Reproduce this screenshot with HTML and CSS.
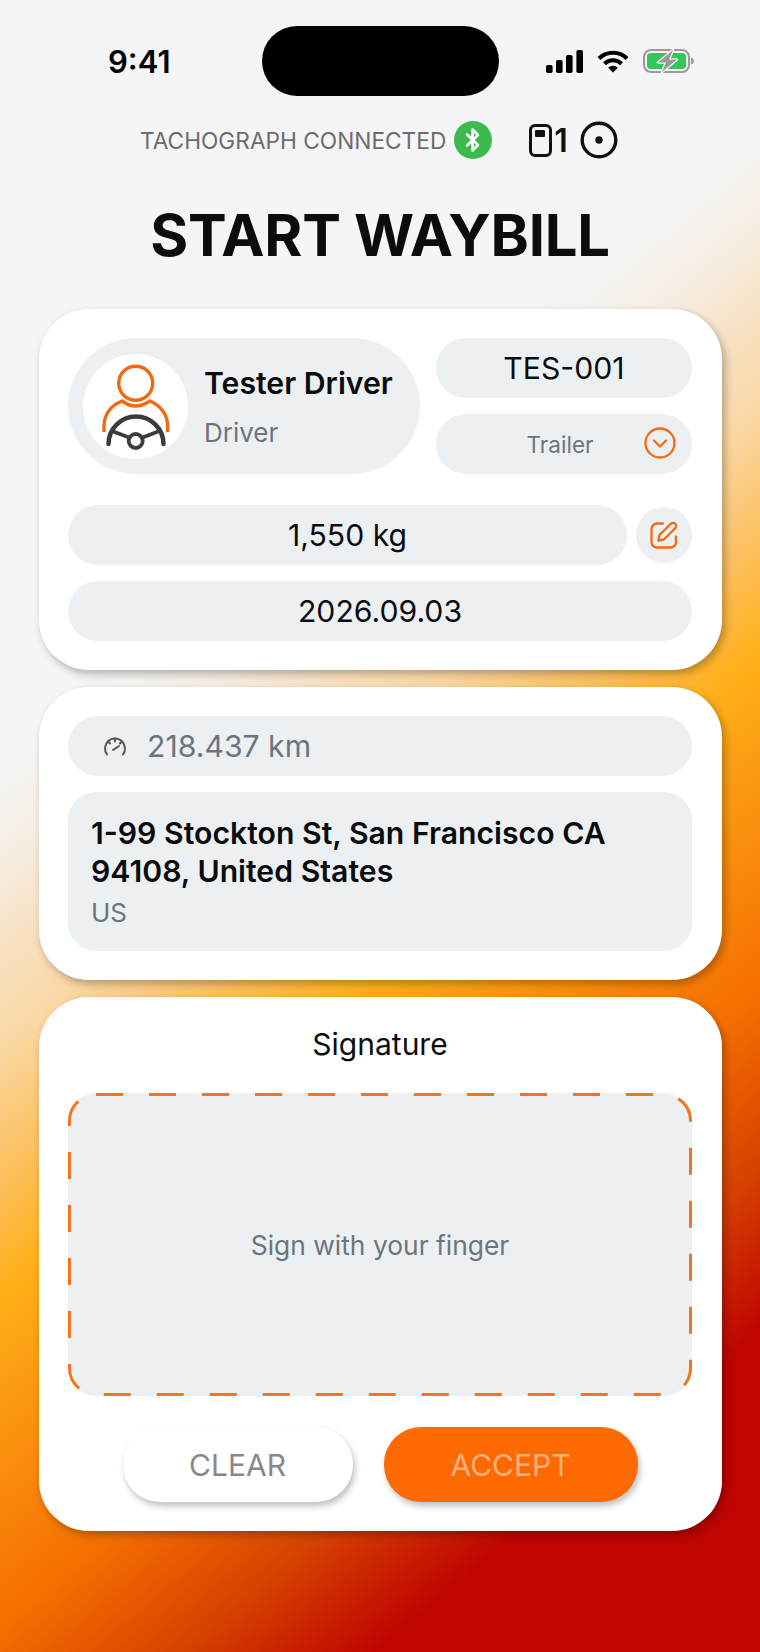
FILE: index.html
```html
<!DOCTYPE html>
<html lang="en">
<head>
  <meta charset="UTF-8">
  <meta name="viewport" content="width=device-width, initial-scale=1.0">
  <title>Start Waybill</title>

  <link rel="stylesheet" href="styles.css">
</head>
<body>

  <header class="status-bar">
    <div class="status-time">9:41</div>
    <div class="island"></div>
    <div class="status-icons">
      <svg width="37" height="23" viewBox="0 0 37 23"><rect x="0" y="15" width="6.6" height="8" rx="1.8"/><rect x="10" y="10" width="6.6" height="13" rx="1.8"/><rect x="20" y="5" width="6.6" height="18" rx="1.8"/><rect x="30.4" y="0" width="6.6" height="23" rx="1.8"/></svg>
      <svg class="wifi" width="32" height="23" viewBox="0 0 32 23"><path d="M2 8.5a20 20 0 0 1 28 0" fill="none" stroke="#000" stroke-width="4"/><path d="M7.5 13.8a12.2 12.2 0 0 1 17 0" fill="none" stroke="#000" stroke-width="4"/><path d="M11.2 17.8a6.8 6.8 0 0 1 9.6 0L16 22.6z"/></svg>
      <svg class="battery" width="51" height="24" viewBox="0 0 51 24">
        <rect x="1" y="1" width="45" height="22" rx="7" fill="none" stroke="#9a9a9a" stroke-width="2"/>
        <rect x="4" y="4" width="39" height="16" rx="4" fill="#33c75a"/>
        <path d="M48 8.5c2 .6 3 2 3 3.500s-1 2.900-3 3.500z" fill="#9a9a9a"/>
        <path d="M30 1L15 13.500h8L19 23l15-12.500h-8z" fill="#9a9a9a" stroke="#f5f5f7" stroke-width="2.500" paint-order="stroke" stroke-linejoin="round"/>
      </svg>
    </div>
  </header>

  <div class="device-row">
    <span class="device-label">TACHOGRAPH CONNECTED</span>
    <span class="bt-badge">
      <svg width="16" height="26" viewBox="0 0 16 26"><path d="M2 7.500l11 10.500-5.500 5.500V2.500L13 8 2 18.500" fill="none" stroke="#fff" stroke-width="2.600" stroke-linejoin="round" stroke-linecap="round"/></svg>
    </span>
    <span class="card-slot">
      <svg width="23" height="33" viewBox="0 0 23 33"><rect x="1.500" y="1.500" width="20" height="30" rx="4.500" fill="none" stroke="#111" stroke-width="3"/><rect x="6" y="6" width="10" height="7" rx="1" fill="#111"/></svg>
      <span class="slot-number">1</span>
    </span>
    <svg class="target" width="38" height="38" viewBox="0 0 38 38"><circle cx="19" cy="19" r="16.800" fill="none" stroke="#111" stroke-width="3.400"/><circle cx="19" cy="19" r="3.700" fill="#111"/></svg>
  </div>

  <h1 class="page-title">START WAYBILL</h1>

  <main class="cards">

    <section class="card">
      <div class="driver-row">
        <div class="driver-pill">
          <div class="avatar">
            <svg width="105" height="105" viewBox="0 0 105 105" fill="none">
              <circle cx="52.700" cy="29.300" r="17" stroke="#f26a0f" stroke-width="3.400"/>
              <path d="M21 78V73C21 60 27 52 39 47Q46 52 52.700 52Q59 52 67 47C78 52 84.700 60 84.700 73V78" stroke="#f26a0f" stroke-width="3.400"/>
              <path d="M25.500 90A27.500 27.500 0 0 1 80.500 90" stroke="#3c3c3c" stroke-width="4.500" stroke-linecap="round"/>
              <circle cx="52.700" cy="87" r="7" stroke="#3c3c3c" stroke-width="3.800"/>
              <path d="M29 77L46 83.500M76.500 77L59.500 83.500" stroke="#3c3c3c" stroke-width="3.800"/>
            </svg>
          </div>
          <div class="driver-info">
            <div class="driver-name">Tester Driver</div>
            <div class="driver-role">Driver</div>
          </div>
        </div>
        <div class="vehicle-col">
          <div class="pill">TES-001</div>
          <div class="pill trailer">
            <span class="trailer-label">Trailer</span>
            <svg class="chevron" width="32" height="32" viewBox="0 0 32 32" fill="none"><circle cx="16" cy="16" r="14.500" stroke="#f26a14" stroke-width="2.300"/><path d="M10 13.500l6 6 6-6" stroke="#f26a14" stroke-width="2.300" stroke-linecap="round" stroke-linejoin="round"/></svg>
          </div>
        </div>
      </div>

      <div class="weight-row">
        <div class="pill weight">1,550 kg</div>
        <div class="edit-btn">
          <svg width="28" height="28" viewBox="0 0 28 28" fill="none" stroke="#f26a14" stroke-width="2.300" stroke-linecap="round" stroke-linejoin="round"><path d="M13 2.500H7A5.500 5.500 0 0 0 1.500 8V21A5.500 5.500 0 0 0 7 26.500H20.500A5.500 5.500 0 0 0 26 21V15.500"/><path d="M8.500 19.500L9.500 14L20.800 2.800A2.700 2.700 0 0 1 25.200 7.200L14 18.500Z"/></svg>
        </div>
      </div>

      <div class="pill date">2026.09.03</div>
    </section>

    <section class="card">
      <div class="pill odometer">
        <svg width="24" height="19" viewBox="0 0 24 19" fill="none" stroke="#555" stroke-width="2" stroke-linecap="round"><path d="M4 17.500A10 10 0 1 1 20 17.500"/><path d="M10 13L16 9"/><path d="M12 1.500V4.500M5 4.500L7 6.500M19 4.500L17 6.500"/></svg>
        <span>218.437 km</span>
      </div>
      <div class="address">
        <div class="address-line">1-99 Stockton St, San Francisco CA 94108, United States</div>
        <div class="address-country">US</div>
      </div>
    </section>

    <section class="card">
      <div class="signature-title">Signature</div>
      <div class="signature-box">
        <!-- dashes are drawn in svg, a css dashed border can't set the length -->
        <svg class="signature-dashes" width="624" height="303" viewBox="0 0 624 303"><rect x="1.500" y="1.500" width="621" height="300" rx="26.500" fill="none" stroke="#f5741f" stroke-width="3" stroke-dasharray="27 26"/></svg>
        <span>Sign with your finger</span>
      </div>
      <div class="buttons">
        <button class="btn btn-clear">CLEAR</button>
        <button class="btn btn-accept">ACCEPT</button>
      </div>
    </section>

  </main>

</body>
</html>
```

FILE: styles.css
```css
body {
  font-family: Inter, "Noto Sans", sans-serif;
  margin: 0;
  padding: 0;
  height: 1652px;
  overflow: hidden;
  color: #0b0c0e;
  background: linear-gradient(140deg, #f5f5f7 33%, #f6eee3 37.5%, #f8e0bf 42%, #fad8a5 45.7%, #fcc060 51.3%, #ffb01a 56.4%, #f56e00 71.3%, #d54000 79%, #bf0500 85.9%);
}

/* status bar */
.status-bar {
  display: grid;
  grid-template-columns: 1fr 237px 1fr;
  align-items: center;
  padding-top: 26px;
}

.status-time {
  padding-left: 108px;
  font-size: 31px;
  font-weight: 600;
  color: #000;
}

.island {
  height: 70px;
  border-radius: 35px;
  background-color: #000;
}

.status-icons {
  display: flex;
  align-items: center;
  padding-left: 47px;
}

.wifi {
  margin-left: 14px;
}

.battery {
  margin-left: 14px;
}

/* tachograph row */
.device-row {
  display: flex;
  align-items: center;
  height: 38px;
  margin-top: 25px;
  padding-left: 140px;
}

.device-label {
  font-size: 22.7px;
  color: #6c6c6c;
}

.bt-badge {
  display: flex;
  align-items: center;
  justify-content: center;
  width: 38px;
  height: 38px;
  margin-left: 8px;
  border-radius: 50%;
  background-color: #3dba4e;
}

.card-slot {
  display: flex;
  align-items: center;
  margin-left: 37px;
  gap: 2px;
}

.slot-number {
  font-size: 32px;
  font-weight: 600;
  color: #111;
}

.target {
  margin-left: 12px;
}

.page-title {
  margin: 41px 0 39px;
  font-size: 58px;
  font-weight: 700;
  line-height: 70px;
  text-align: center;
  letter-spacing: -0.25px;
  color: #0b0c0e;
}

/* cards */
.cards {
  display: flex;
  flex-direction: column;
  gap: 17px;
  width: 683px;
  margin-left: 39px;
}

.card {
  padding: 29px 30px 29px 29px;
  background-color: white;
  border-radius: 50px;
  box-shadow: 3px 4px 8px rgba(0, 0, 0, 0.28);
}

.pill {
  display: flex;
  align-items: center;
  justify-content: center;
  height: 60px;
  border-radius: 30px;
  background-color: #edf0f3;
  font-size: 30.2px;
}

.driver-row {
  display: flex;
  gap: 16px;
}

.driver-pill {
  display: flex;
  align-items: center;
  width: 352px;
  height: 136px;
  border-radius: 68px;
  background-color: #edf0f3;
}

.avatar {
  width: 105px;
  height: 105px;
  margin-left: 15px;
  border-radius: 50%;
  background-color: white;
}

.driver-info {
  margin-left: 16px;
  padding-top: 1px;
}

.driver-name {
  font-size: 30.2px;
  font-weight: 600;
  margin-bottom: 16px;
}

.driver-role {
  font-size: 26px;
  color: #6c757d;
}

.vehicle-col {
  display: flex;
  flex-direction: column;
  gap: 16px;
  width: 256px;
}

.trailer {
  position: relative;
  padding-right: 8px;
}

.trailer-label {
  font-size: 22.6px;
  color: #6c757d;
}

.chevron {
  position: absolute;
  right: 16px;
  top: 13px;
}

.weight-row {
  display: flex;
  align-items: center;
  justify-content: space-between;
  margin-top: 31px;
}

.weight {
  width: 559px;
}

.edit-btn {
  display: flex;
  align-items: center;
  justify-content: center;
  width: 56px;
  height: 56px;
  border-radius: 50%;
  background-color: #edf0f3;
}

.date {
  margin-top: 16px;
}

.odometer {
  justify-content: flex-start;
  padding-left: 35px;
  gap: 20px;
  color: #6c757d;
}

.address {
  margin-top: 16px;
  padding: 22px 23px 20px;
  border-radius: 28px;
  background-color: #edf0f3;
}

.address-line {
  font-size: 30.2px;
  font-weight: 600;
  line-height: 38px;
}

.address-country {
  margin-top: 4px;
  font-size: 26px;
  line-height: 37px;
  color: #6c757d;
}

.signature-title {
  font-size: 30px;
  line-height: 36px;
  text-align: center;
}

.signature-box {
  position: relative;
  display: flex;
  align-items: center;
  justify-content: center;
  height: 303px;
  margin-top: 31px;
  border-radius: 28px;
  background-color: #edf0f3;
  font-size: 26.4px;
  color: #6c757d;
}

.signature-dashes {
  position: absolute;
  left: 0;
  top: 0;
}

.buttons {
  display: flex;
  justify-content: center;
  gap: 31px;
  margin-top: 31px;
}

.btn {
  height: 75px;
  border: none;
  border-radius: 37px;
  font-family: inherit;
  font-size: 30px;
  box-shadow: 2px 4px 6px rgba(0, 0, 0, 0.25);
}

.btn-clear {
  width: 230px;
  background-color: white;
  color: #888;
}

.btn-accept {
  width: 254px;
  background-color: #fd6a02;
  color: #ffb07e;
}
```
